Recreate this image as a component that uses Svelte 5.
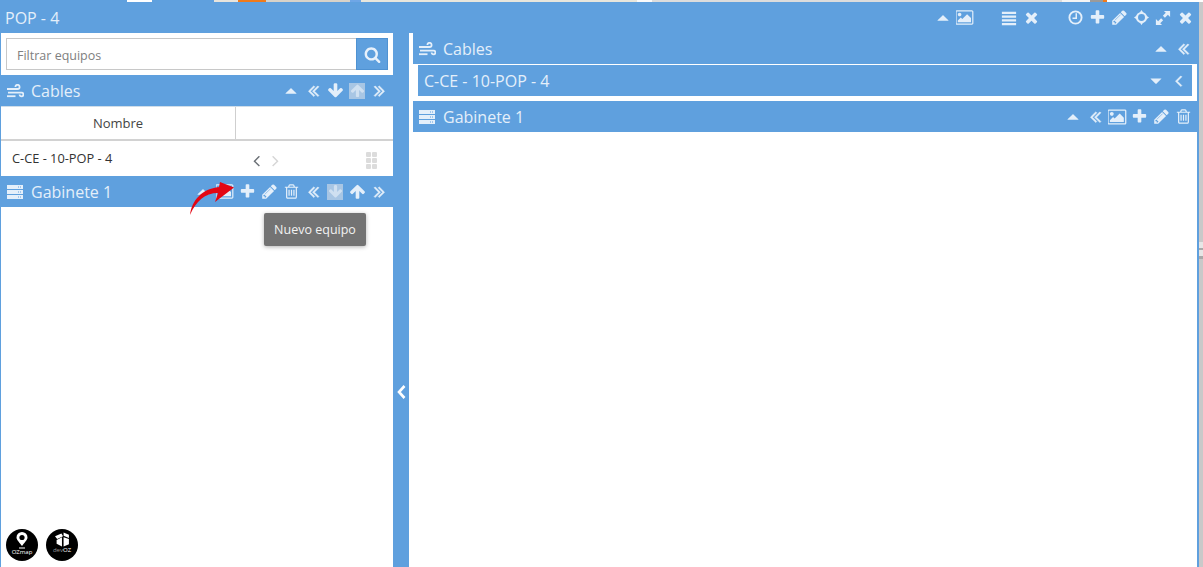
<script>
    const paths = {
        plus: 'M1600 736v192q0 40-28 68t-68 28h-416v416q0 40-28 68t-68 28h-192q-40 0-68-28t-28-68v-416h-416q-40 0-68-28t-28-68v-192q0-40 28-68t68-28h416v-416q0-40 28-68t68-28h192q40 0 68 28t28 68v416h416q40 0 68 28t28 68z',
        times: 'M1490 1322q0 40-28 68l-136 136q-28 28-68 28t-68-28l-294-294-294 294q-28 28-68 28t-68-28l-136-136q-28-28-28-68t28-68l294-294-294-294q-28-28-28-68t28-68l136-136q28-28 68-28t68 28l294 294 294-294q28-28 68-28t68 28l136 136q28 28 28 68t-28 68l-294 294 294 294q28 28 28 68z',
        search: 'M1216 832q0-185-131.500-316.500t-316.500-131.500-316.500 131.500-131.500 316.500 131.500 316.500 316.500 131.500 316.500-131.500 131.500-316.500zm512 832q0 52-38 90t-90 38q-54 0-90-38l-343-342q-179 124-399 124-143 0-273.500-55.500t-225-150-150-225-55.500-273.500 55.500-273.500 150-225 225-150 273.500-55.500 273.500 55.500 225 150 150 225 55.500 273.500q0 220-124 399l343 343q37 37 37 90z',
        pencil: 'M491 1536l91-91-235-235-91 91v107h128v128h107zm523-928q0-22-22-22-10 0-17 7l-542 542q-7 7-7 17 0 22 22 22 10 0 17-7l542-542q7-7 7-17zm-54-192l416 416-832 832h-416v-416zm683 96q0 53-37 90l-166 166-416-416 166-165q36-38 90-38 53 0 91 38l235 234q37 39 37 91z',
        trash: 'M704 736v576q0 14-9 23t-23 9h-64q-14 0-23-9t-9-23v-576q0-14 9-23t23-9h64q14 0 23 9t9 23zm256 0v576q0 14-9 23t-23 9h-64q-14 0-23-9t-9-23v-576q0-14 9-23t23-9h64q14 0 23 9t9 23zm256 0v576q0 14-9 23t-23 9h-64q-14 0-23-9t-9-23v-576q0-14 9-23t23-9h64q14 0 23 9t9 23zm128 724v-948h-896v948q0 22 7 40.500t14.500 27 10.500 8.500h832q3 0 10.500-8.500t14.500-27 7-40.500zm-672-1076h448l-48-117q-7-9-17-11h-317q-10 2-17 11zm928 32v64q0 14-9 23t-23 9h-96v948q0 83-47 143.500t-113 60.500h-832q-66 0-113-58.500t-47-141.500v-952h-96q-14 0-23-9t-9-23v-64q0-14 9-23t23-9h309l70-167q15-37 54-63t79-26h320q40 0 79 26t54 63l70 167h309q14 0 23 9t9 23z',
        down: 'M1675 832q0 53-37 90l-651 652q-39 37-91 37-53 0-90-37l-651-652q-38-36-38-90 0-53 38-91l74-75q39-37 91-37 53 0 90 37l294 294v-704q0-52 38-90t90-38h128q52 0 90 38t38 90v704l294-294q37-37 90-37 52 0 91 37l75 75q37 39 37 91z',
        up: 'M1675 971q0 51-37 90l-75 75q-38 38-91 38-54 0-90-38l-294-293v704q0 52-37.500 84.500t-90.500 32.500h-128q-53 0-90.500-32.500t-37.500-84.500v-704l-294 293q-36 38-90 38t-90-38l-75-75q-38-38-38-90 0-53 38-91l651-651q35-37 90-37 54 0 91 37l651 651q37 39 37 91z',
        dleft: 'M1011 1376q0 13-10 23l-50 50q-10 10-23 10t-23-10l-466-466q-10-10-10-23t10-23l466-466q10-10 23-10t23 10l50 50q10 10 10 23t-10 23l-393 393 393 393q10 10 10 23zm384 0q0 13-10 23l-50 50q-10 10-23 10t-23-10l-466-466q-10-10-10-23t10-23l466-466q10-10 23-10t23 10l50 50q10 10 10 23t-10 23l-393 393 393 393q10 10 10 23z',
        dright: 'M979 960q0 13-10 23l-466 466q-10 10-23 10t-23-10l-50-50q-10-10-10-23t10-23l393-393-393-393q-10-10-10-23t10-23l50-50q10-10 23-10t23 10l466 466q10 10 10 23zm384 0q0 13-10 23l-466 466q-10 10-23 10t-23-10l-50-50q-10-10-10-23t10-23l393-393-393-393q-10-10-10-23t10-23l50-50q10-10 23-10t23 10l466 466q10 10 10 23z',
        left: 'M1203 544q0 13-10 23l-393 393 393 393q10 10 10 23t-10 23l-50 50q-10 10-23 10t-23-10l-466-466q-10-10-10-23t10-23l466-466q10-10 23-10t23 10l50 50q10 10 10 23z',
        right: 'M1171 960q0 13-10 23l-466 466q-10 10-23 10t-23-10l-50-50q-10-10-10-23t10-23l393-393-393-393q-10-10-10-23t10-23l50-50q10-10 23-10t23 10l466 466q10 10 10 23z',
        caretup: 'M300 1190 q-30 0 -10 -30 L850 610 q46 -40 92 0 L1500 1160 q20 30 -10 30 z',
        caretdown: 'M300 610 q-30 0 -10 30 L850 1190 q46 40 92 0 L1500 640 q20 -30 -10 -30 z',
        image: 'M576 576q0 80-56 136t-136 56-136-56-56-136 56-136 136-56 136 56 56 136zm1024 384v448h-1408v-192l320-320 160 160 512-512zm96-704h-1600q-13 0-22.500 9.500t-9.500 22.500v1216q0 13 9.500 22.500t22.500 9.500h1600q13 0 22.500-9.500t9.500-22.500v-1216q0-13-9.500-22.500t-22.500-9.500zm160 32v1216q0 66-47 113t-113 47h-1600q-66 0-113-47t-47-113v-1216q0-66 47-113t113-47h1600q66 0 113 47t47 113z',
        bars: 'M100 200h1592v240H100zM100 620h1592v240H100zM100 1040h1592v240H100zM100 1460h1592v240H100z',
        expand: 'M1000 100h692v692l-250-250-330 330-234-234 330-330zM792 1692H100v-692l250 250 330-330 234 234-330 330z'
    };
    paths.imagebig = paths.image;
    paths.thinleft = paths.left;

    const sizes = { caretup: 16, caretdown: 16, dleft: 19, dright: 19, left: 19, thinleft: 19, right: 19, image: 17, imagebig: 18, bars: 16, expand: 16 };
    const wide = { image: true, imagebig: true };
    const bold = { dleft: true, dright: true, left: true };

    const titleIcons = ['caretup', 'image', null, 'bars', 'times', null, 'clock', 'plus', 'pencil', 'cross', 'expand', 'times'];
    const cablesLeft = ['caretup', 'dleft', 'down', { n: 'up', on: true }, 'dright'];
    const gabineteLeft = ['caretup', 'image', 'plus', 'pencil', 'trash', 'dleft', { n: 'down', on: true }, 'up', 'dright'];
    const gabineteRight = ['caretup', 'dleft', 'imagebig', 'plus', 'pencil', 'trash'];
</script>

{#snippet icon(name, size)}
    {@const s = size ?? sizes[name] ?? 17}
    {#if name === 'clock'}
        <svg width="15" height="15" viewBox="0 0 16 16"><circle cx="8" cy="8" r="6.500" fill="none" stroke="currentColor" stroke-width="2" /><path d="M8.800 3.500v5.300H4.800" fill="none" stroke="currentColor" stroke-width="1.600" /></svg>
    {:else if name === 'cross'}
        <svg width="15" height="15" viewBox="0 0 16 16"><circle cx="8" cy="8" r="4.800" fill="none" stroke="currentColor" stroke-width="2.200" /><path d="M8 0l2.600 3.800H5.400zM8 16l2.600-3.800H5.400zM0 8l3.800-2.600v5.200zM16 8l-3.800-2.600v5.200z" fill="currentColor" /></svg>
    {:else if name === 'wind'}
        <svg width="17" height="14" viewBox="0 0 17 14" fill="none" stroke="currentColor" stroke-width="1.800"><path d="M0 5h10.500a2.100 2.100 0 1 0-2.100-2.100" /><path d="M1 8.600h13.500a1.900 1.900 0 1 1-1.900 1.900" /><path d="M0 12.200h8.500" /></svg>
    {:else if name === 'server'}
        <svg width="16" height="14" viewBox="0 0 16 14" fill="currentColor"><path d="M0 0h16v4H0zM0 5h16v4H0zM0 10h16v4H0z" /><path d="M11 1.500h1v1h-1zM13 1.500h1v1h-1zM11 6.500h1v1h-1zM13 6.500h1v1h-1zM11 11.500h1v1h-1zM13 11.500h1v1h-1z" fill="#5fa0de" /></svg>
    {:else}
        <svg width={wide[name] ? s + 1 : s} height={s} viewBox={wide[name] ? '0 0 1920 1792' : '0 0 1792 1792'} fill="currentColor" stroke={bold[name] ? 'currentColor' : 'none'} stroke-width="50"><path d={paths[name]} /></svg>
    {/if}
{/snippet}

{#snippet toolbar(list)}
    <div class="tools">
        {#each list as item}
            {#if item === null}
                <span class="slot"></span>
            {:else if typeof item === 'string'}
                <span class="slot">{@render icon(item)}</span>
            {:else}
                <span class="slot"><span class="on">{@render icon(item.n, 15)}</span></span>
            {/if}
        {/each}
    </div>
{/snippet}

<div class="page">
    <div class="map-strip">
        <span class="m1"></span><span class="m2"></span><span class="m3"></span><span class="m4"></span><span class="m5"></span>
        <span class="m6"></span><span class="m7"></span><span class="m8"></span><span class="m9"></span><span class="m10"></span>
    </div>

    <div class="stage">
        <div class="window">
            <header class="bar title">
                <span class="label title-label">POP - 4</span>
                {@render toolbar(titleIcons)}
            </header>

            <div class="body">
                <aside class="left">
                    <div class="search">
                        <input type="text" placeholder="Filtrar equipos" />
                        <button type="button" aria-label="Buscar">{@render icon('search', 17)}</button>
                    </div>

                    <div class="bar">
                        <span class="head-icon">{@render icon('wind')}</span>
                        <span class="label">Cables</span>
                        {@render toolbar(cablesLeft)}
                    </div>

                    <div class="thead">
                        <div class="th">Nombre</div>
                        <div class="th"></div>
                    </div>
                    <div class="trow">
                        <div class="td-name">C-CE - 10-POP - 4</div>
                        <div class="pager">
                            <span class="prev">{@render icon('thinleft')}</span>
                            <span class="next">{@render icon('right')}</span>
                        </div>
                        <div class="grip">
                            {#each Array(6) as _}<i></i>{/each}
                        </div>
                    </div>

                    <div class="bar">
                        <span class="head-icon">{@render icon('server')}</span>
                        <span class="label">Gabinete 1</span>
                        {@render toolbar(gabineteLeft)}
                    </div>

                    <div class="tooltip">Nuevo equipo</div>

                    <svg class="red-arrow" width="55" height="42" viewBox="0 0 55 42">
                        <path d="M5 37C7 22 17 11 34 9L35 4L49 9.500L30 24L33 15C20 15 11 23 5 37Z" fill="#e30613" />
                    </svg>

                    <div class="logos">
                        <div class="logo">
                            <svg width="12" height="17" viewBox="0 0 12 17"><path d="M6 0a5.500 5.500 0 0 0-5.500 5.500C.5 8 4 11 6 14 8 11 11.500 8 11.500 5.500A5.500 5.500 0 0 0 6 0z" fill="#fff" /><circle cx="6" cy="5.500" r="2.600" fill="#000" /><path d="M3 15.500h6v1H3z" fill="#fff" /></svg>
                            <span>OZmap</span>
                        </div>
                        <div class="logo">
                            <svg width="15" height="15" viewBox="0 0 14 14"><path d="M0 4l6-2.500L7.500 4 2 6.500zM8 .5l5 2v3L8 3.500zM1.500 7.500l5-2.500v8.500l-5-2.500zM8 5l5 1.500v5L8 13.500z" fill="#fff" /></svg>
                            <span><em>dev</em>OZ</span>
                        </div>
                    </div>
                </aside>

                <button class="splitter" type="button" aria-label="Colapsar">
                    <svg width="9" height="14" viewBox="0 0 9 14" fill="none" stroke="currentColor" stroke-width="2.600"><path d="M7.500 1L2 7l5.500 6" /></svg>
                </button>

                <main class="right">
                    <div class="bar">
                        <span class="head-icon">{@render icon('wind')}</span>
                        <span class="label">Cables</span>
                        {@render toolbar(['caretup', 'dleft'])}
                    </div>
                    <div class="cable-wrap">
                        <div class="bar cable">
                            <span class="label">C-CE - 10-POP - 4</span>
                            {@render toolbar(['caretdown', 'left'])}
                        </div>
                    </div>
                    <div class="bar">
                        <span class="head-icon">{@render icon('server')}</span>
                        <span class="label">Gabinete 1</span>
                        {@render toolbar(gabineteRight)}
                    </div>
                </main>
            </div>
        </div>
        <div class="side"></div>
    </div>
</div>

<style>
    :global(body) {
        margin: 0;
        background: #fff;
        overflow: hidden;
    }
    .page {
        width: 1203px;
        height: 567px;
        overflow: hidden;
        display: flex;
        flex-direction: column;
        font-family: "Open Sans", sans-serif;
    }
    .map-strip {
        height: 2px;
        flex: none;
        display: flex;
        background: #fff;
    }
    .map-strip span {
        display: block;
        height: 2px;
    }
    .m1 { width: 127px; background: #5fa0de; }
    .m2 { width: 25px; background: #fff; }
    .m3 { width: 62px; background: #5fa0de; }
    .m4 { width: 136px; background: linear-gradient(90deg, #e8e4dc 0 18%, #f07a1a 18% 38%, #d8d2c8 38%); }
    .m5 { width: 11px; background: #6ea6e6; }
    .m6 { width: 276px; background: #e8e6dc; }
    .m7 { width: 15px; background: #fbfbfb; }
    .m8 { width: 410px; background: #dcdcdc; }
    .m9 { width: 28px; background: #f4f4f4; }
    .m10 { width: 17px; background: linear-gradient(90deg, #9a9a9a 0 76%, #f07a1a 76%); }

    .stage {
        flex: 1;
        min-height: 0;
        display: flex;
    }
    .side {
        flex: 1;
        background: linear-gradient(#c9c9c9 0 240px, #e6e6e6 240px 246px, #a9a9a9 246px 248px, #e6e6e6 248px 254px, #a9a9a9 254px 257px, #c9c9c9 257px);
    }
    .window {
        width: 1199px;
        flex: none;
        display: flex;
        flex-direction: column;
        background: #5fa0de;
    }
    .bar {
        height: 31px;
        flex: none;
        display: flex;
        align-items: center;
        padding-left: 6px;
        background: #5fa0de;
        color: #e4effa;
        box-sizing: border-box;
    }
    .title {
        padding-left: 5px;
    }
    .label {
        font-size: 16px;
        white-space: nowrap;
    }
    .head-icon {
        display: flex;
        width: 24px;
        flex: none;
    }
    .tools {
        margin-left: auto;
        display: flex;
        align-items: center;
        padding-right: 3px;
    }
    .slot {
        width: 22px;
        height: 22px;
        display: flex;
        align-items: center;
        justify-content: center;
        flex: none;
    }
    .on {
        width: 16px;
        height: 16px;
        display: flex;
        align-items: center;
        justify-content: center;
        background: #a8c6e4;
        color: #cfe0f1;
    }
    .body {
        flex: 1;
        min-height: 0;
        display: flex;
    }
    .left {
        position: relative;
        width: 392px;
        margin-left: 1px;
        flex: none;
        background: #fff;
    }
    .search {
        height: 42px;
        display: flex;
        align-items: center;
        padding: 0 5px;
        box-sizing: border-box;
    }
    .search input {
        flex: 1;
        min-width: 0;
        height: 32px;
        box-sizing: border-box;
        border: 1px solid #c8c8c8;
        border-right: none;
        padding: 2px 10px 0;
        font: 12.500px "Open Sans", sans-serif;
        outline: none;
    }
    .search input::placeholder {
        color: #808080;
    }
    .search button {
        width: 32px;
        height: 32px;
        flex: none;
        padding: 0;
        border: 1px solid #4f92d2;
        background: #5fa0de;
        color: #e8f1fb;
        display: flex;
        align-items: center;
        justify-content: center;
    }
    .thead {
        height: 35px;
        display: grid;
        grid-template-columns: 235px 1fr;
        border-top: 1px solid #cfdde9;
        border-bottom: 2px solid #d2d2d2;
        box-sizing: border-box;
    }
    .th {
        display: flex;
        align-items: center;
        justify-content: center;
        font-size: 13px;
        color: #444;
    }
    .th:first-child {
        border-right: 1px solid #cfcfcf;
    }
    .trow {
        height: 35px;
        display: flex;
        align-items: center;
        font-size: 12.800px;
        color: #333;
        padding: 0 0 2px 11px;
        box-sizing: border-box;
    }
    .td-name {
        width: 235px;
        flex: none;
    }
    .pager {
        display: flex;
        margin-top: 5px;
    }
    .prev {
        display: flex;
        color: #6b7076;
    }
    .next {
        display: flex;
        color: #d6d6d6;
    }
    .grip {
        margin-left: 81px;
        margin-top: 5px;
        display: grid;
        grid-template-columns: 5px 5px;
        grid-auto-rows: 5px;
        gap: 1px;
    }
    .grip i {
        background: #dcdcdc;
        border-radius: 1px;
    }
    .tooltip {
        position: absolute;
        left: 263px;
        top: 180px;
        width: 102px;
        height: 33px;
        box-sizing: border-box;
        display: flex;
        align-items: center;
        justify-content: center;
        background: #737373;
        color: #f2f2f2;
        font-size: 12.500px;
        border-radius: 2px;
        box-shadow: 0 1px 4px rgba(0, 0, 0, 0.3);
    }
    .red-arrow {
        position: absolute;
        left: 184px;
        top: 145px;
    }
    .logos {
        position: absolute;
        left: 5px;
        bottom: 6px;
        display: flex;
        gap: 8px;
    }
    .logo {
        width: 32px;
        height: 32px;
        border-radius: 50%;
        background: #000;
        color: #fff;
        display: flex;
        flex-direction: column;
        align-items: center;
        padding-top: 3px;
        box-sizing: border-box;
        font-size: 6px;
        line-height: 6px;
        overflow: hidden;
    }
    .logo em {
        font-style: normal;
        color: #999;
    }
    .splitter {
        width: 16px;
        flex: none;
        padding: 184px 0 0 1px;
        border: none;
        background: #5fa0de;
        color: #fff;
        display: flex;
        align-items: center;
        justify-content: center;
    }
    .right {
        width: 790px;
        flex: none;
        background: #fff;
        padding-left: 4px;
        border-right: 2px solid #5fa0de;
        box-sizing: border-box;
    }
    .cable-wrap {
        padding: 1px 5px 5px;
    }
    .cable {
        padding-left: 6px;
    }
</style>
